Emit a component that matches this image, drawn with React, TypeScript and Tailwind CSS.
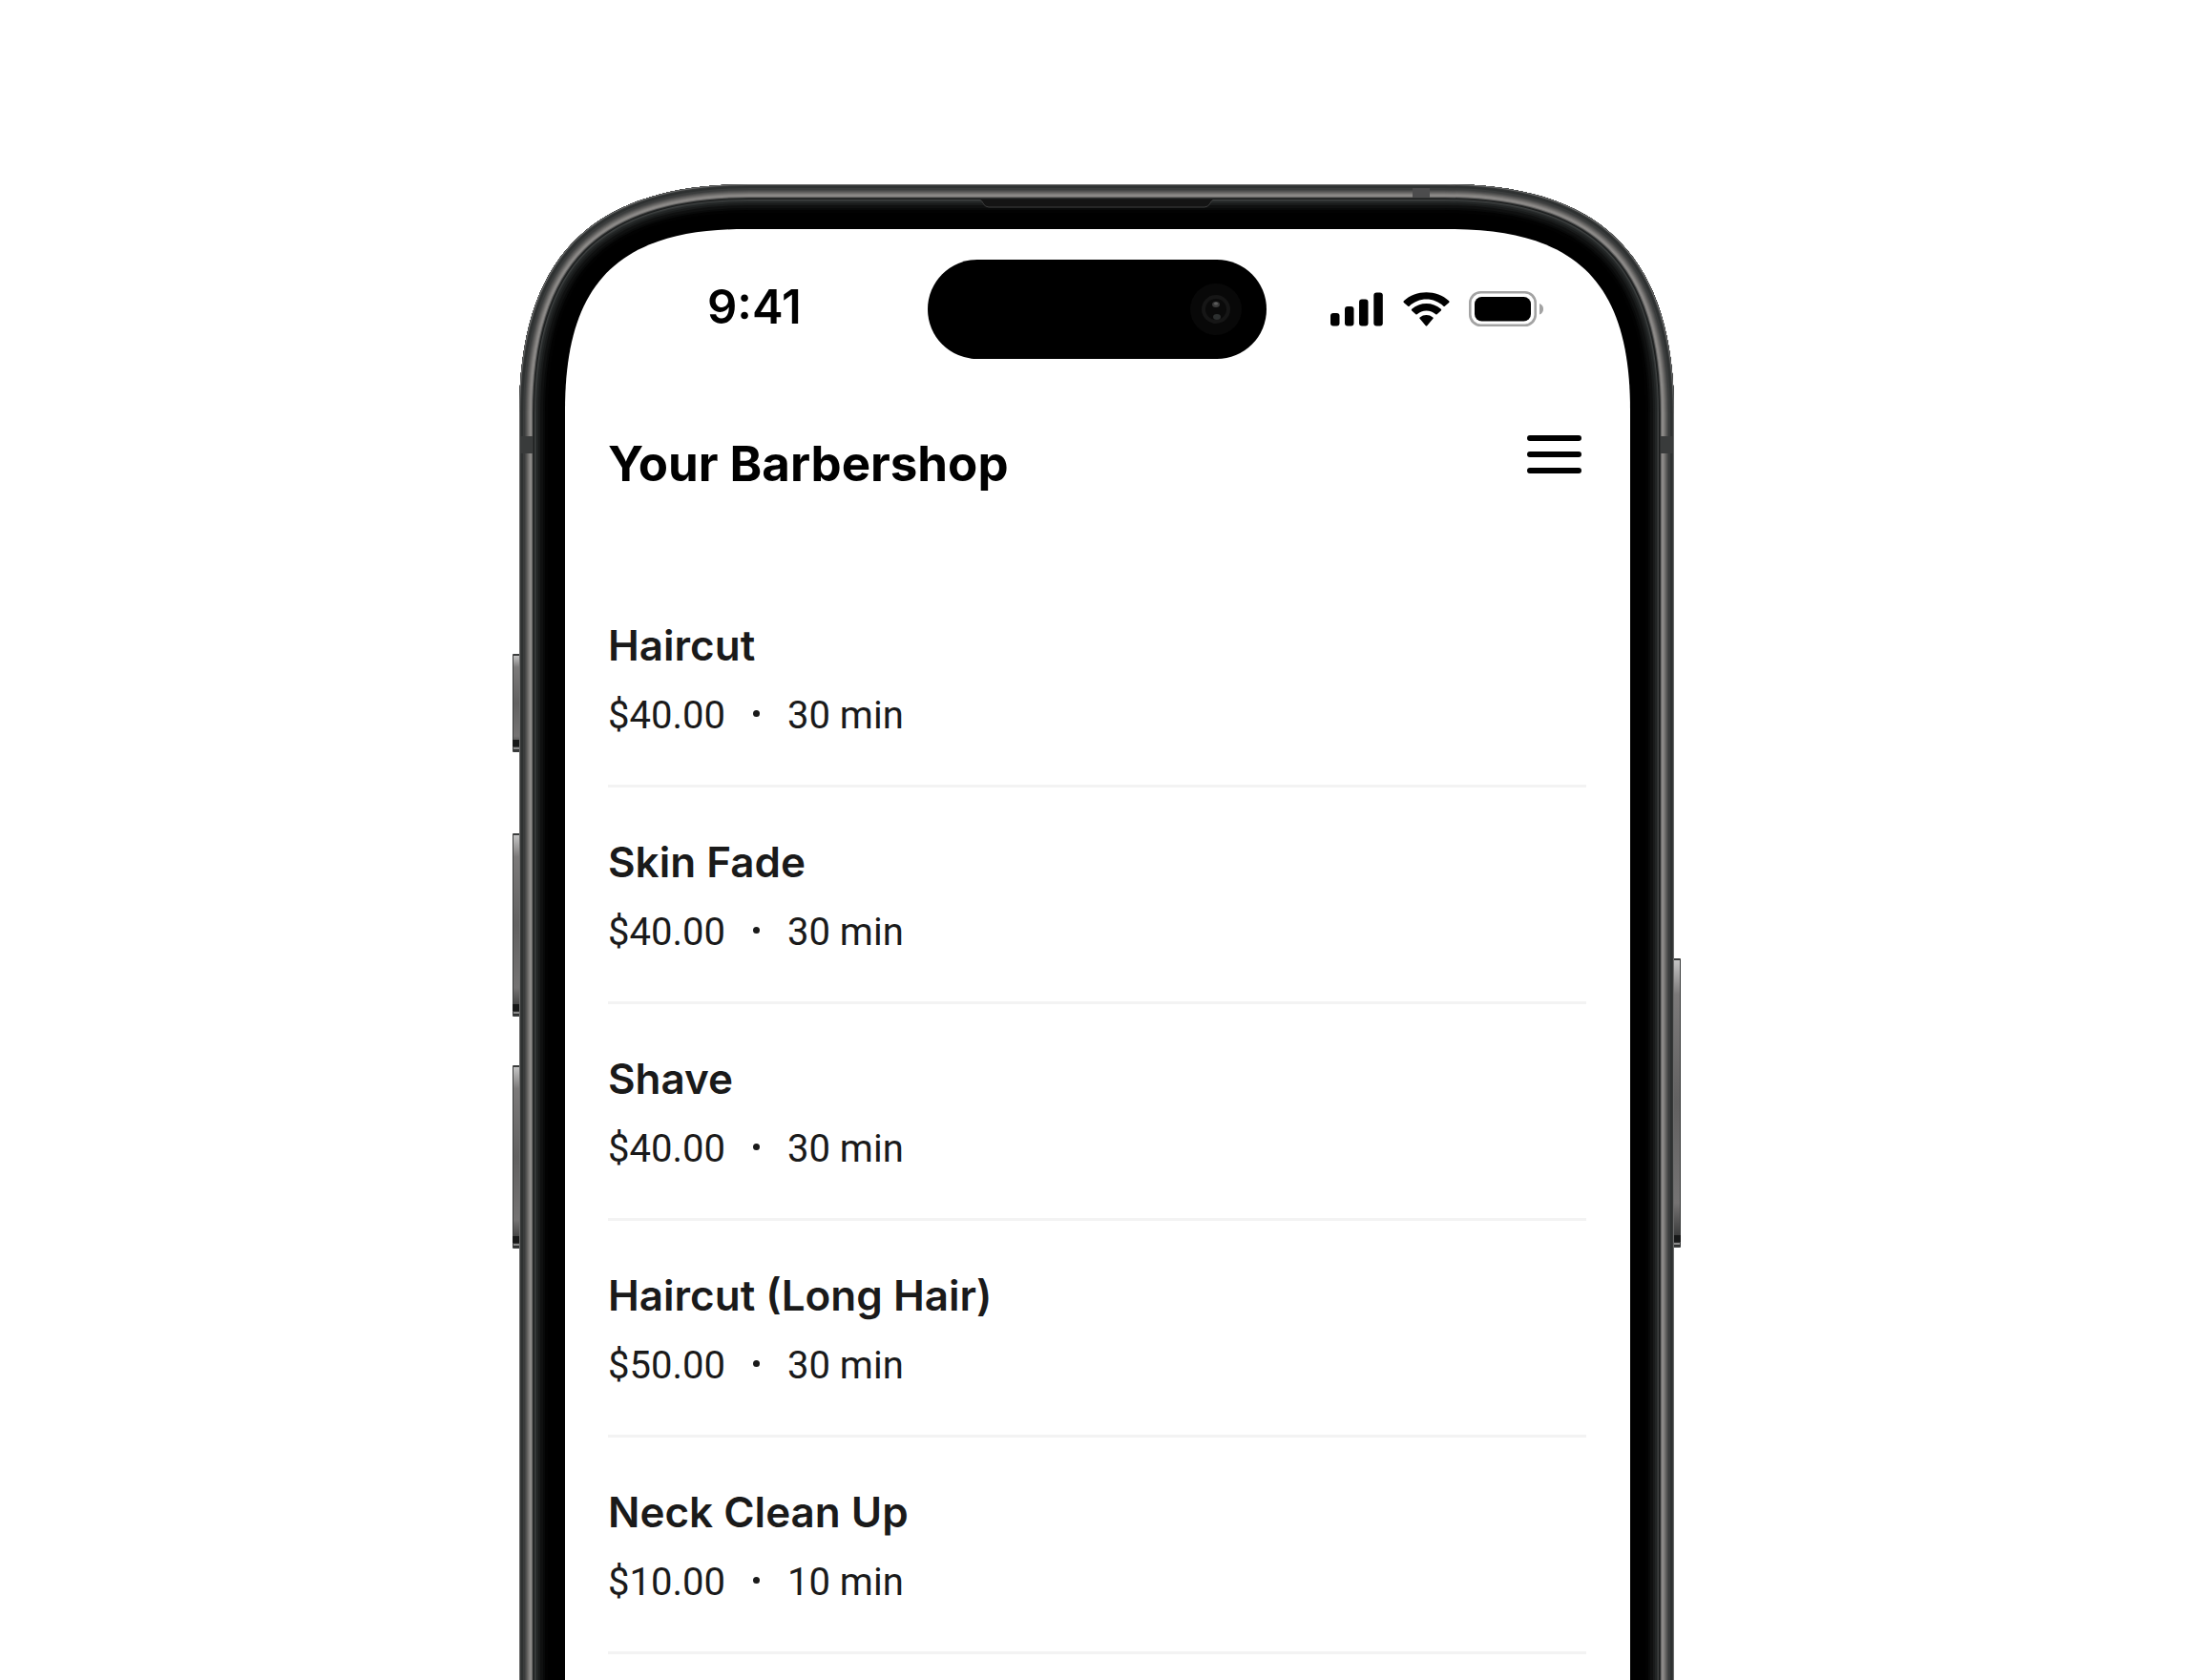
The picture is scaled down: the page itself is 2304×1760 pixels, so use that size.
interface Service {
  name: string;
  price: string;
  duration: string;
}

const services: Service[] = [
  { name: "Haircut", price: "$40.00", duration: "30 min" },
  { name: "Skin Fade", price: "$40.00", duration: "30 min" },
  { name: "Shave", price: "$40.00", duration: "30 min" },
  { name: "Haircut (Long Hair)", price: "$50.00", duration: "30 min" },
  { name: "Neck Clean Up", price: "$10.00", duration: "10 min" },
];

// Continuous top corners: e is where the curve starts, c where its handles sit.
// The bottom runs far below the fold.
const shellPath = (x: number, y: number, w: number, e: number, c: number) => {
  const r = x + w;
  return [
    `M${x} 4000 V${y + e}`,
    `C${x} ${y + c} ${x + c} ${y} ${x + e} ${y}`,
    `H${r - e}`,
    `C${r - c} ${y} ${r} ${y + c} ${r} ${y + e}`,
    `V4000 Z`,
  ].join(" ");
};

const outer = shellPath(0, 0, 1210, 241, 76);
const screen = shellPath(48, 47, 1116, 190, 56);

// [depth from the outer edge, colour], deepest first
const metal: [number, string][] = [
  [30, "#020202"],
  [27, "#080909"],
  [25, "#0f1010"],
  [22, "#191b1b"],
  [20, "#222525"],
  [18, "#303333"],
  [17, "#3d4040"],
  [16, "#1c1e1e"],
  [15, "#2e3030"],
  [14, "#6a6968"],
  [13, "#8b8987"],
  [11, "#807e7c"],
  [10, "#706f6d"],
  [9, "#626160"],
  [8, "#535352"],
  [7, "#464747"],
  [6, "#3a3c3c"],
  [4, "#2e3131"],
  [2, "#363838"],
  [1, "#6c6d6d"],
];

const leftKeys = [
  { y: 492, h: 103 },
  { y: 680, h: 192 },
  { y: 923, h: 192 },
];

const SideKey = ({ x, y, h }: { x: number; y: number; h: number }) => (
  <g>
    <rect x={x} y={y} width="8" height={h} rx="1" fill="#3b3d3d" />
    <rect x={x + 1} y={y + 2} width="6" height={h - 4} fill="url(#key)" />
    <rect x={x} y={y + h - 13} width="8" height="7" fill="#171818" />
    <rect x={x + 1} y={y + h - 5} width="6" height="2" fill="#8b8b8b" />
  </g>
);

const PhoneFrame = () => (
  <svg
    className="absolute -left-2 top-0 h-full w-[1226px]"
    aria-hidden="true"
  >
    <defs>
      <clipPath id="body">
        <path d={outer} />
      </clipPath>
      <linearGradient id="key" x1="0" y1="0" x2="0" y2="1">
        <stop offset="0" stopColor="#c4c4c4" />
        <stop offset="0.12" stopColor="#7c7a7a" />
        <stop offset="0.5" stopColor="#626161" />
        <stop offset="0.85" stopColor="#757373" />
        <stop offset="1" stopColor="#2a2b2b" />
      </linearGradient>
    </defs>
    <g transform="translate(8 0)">
      {leftKeys.map((key) => (
        <SideKey key={key.y} x={-7} y={key.y} h={key.h} />
      ))}
      <SideKey x={1209} y={811} h={303} />
      <g clipPath="url(#body)">
        <path d={outer} fill="#000" />
        {metal.map(([depth, color]) => (
          <path
            key={depth}
            d={outer}
            fill="none"
            stroke={color}
            strokeWidth={depth * 2}
          />
        ))}
        {/* antenna bands */}
        <rect x="1" y="264" width="13" height="18" fill="#393b3b" />
        <rect x="1196" y="264" width="13" height="18" fill="#393b3b" />
        <rect x="936" y="4" width="18" height="10" fill="#4c4c4d" />
      </g>
      {/* earpiece */}
      <path
        d="M483 16 Q485 17 486 20 Q488 24 492 24 H718 Q722 24 724 20 Q725 17 727 16 Z"
        fill="#141414"
      />
      <path
        d="M483 17 Q485 17 486 20 Q488 24 492 24 H718 Q722 24 724 20 Q725 17 727 17"
        fill="none"
        stroke="#3c3c3c"
      />
      <path d={screen} fill="#fff" />
    </g>
  </svg>
);

const DynamicIsland = () => (
  <div className="flex h-[104px] w-[355px] items-center justify-end rounded-full bg-black pr-[26px]">
    <svg width="54" height="54" viewBox="0 0 54 54" aria-hidden="true">
      <circle cx="27" cy="27" r="27" fill="#080808" />
      <circle cx="27" cy="27" r="15" fill="#161616" />
      <circle cx="27" cy="27" r="11" fill="#0a0a0a" />
      <ellipse cx="27" cy="22" rx="4" ry="3" fill="#3a3a3a" />
      <ellipse cx="27" cy="21" rx="2" ry="1.5" fill="#5c5c5c" />
      <ellipse cx="28" cy="35" rx="4" ry="3" fill="#2c2f2f" />
    </svg>
  </div>
);

const StatusIcons = () => (
  <div className="flex items-center">
    <svg width="55" height="36" viewBox="0 0 55 36" aria-label="Signal">
      <rect x="0" y="22" width="9.5" height="13.5" rx="3" />
      <rect x="15" y="15" width="9.5" height="20.5" rx="3" />
      <rect x="30" y="7.5" width="9.5" height="28" rx="3" />
      <rect x="45.3" y="0.5" width="9.5" height="35" rx="3" />
    </svg>
    <svg
      className="ml-[21px]"
      width="49"
      height="36"
      viewBox="0 0 49 36"
      aria-label="Wi-Fi"
    >
      <path d="M24.5 7.6 C31.2 7.6 37.6 10.2 42.4 14.8 C42.8 15.2 43.4 15.2 43.8 14.8 L48.2 10.9 C48.7 10.4 48.7 9.8 48.2 9.3 C35.4 -2.8 13.6 -2.8 0.8 9.3 C0.3 9.8 0.3 10.4 0.8 10.9 L5.2 14.8 C5.6 15.2 6.2 15.2 6.6 14.8 C11.4 10.2 17.8 7.6 24.5 7.6 Z" />
      <path d="M24.5 19.4 C28.2 19.4 31.6 20.8 34.3 23.3 C34.7 23.7 35.2 23.7 35.6 23.3 L39.8 19.4 C40.3 19 40.3 18.3 39.8 17.8 C31.2 9.9 17.8 9.9 9.2 17.8 C8.7 18.3 8.7 19 9.2 19.4 L13.4 23.3 C13.8 23.7 14.3 23.7 14.7 23.3 C17.4 20.8 20.8 19.4 24.5 19.4 Z" />
      <path d="M31.3 28 C31.8 27.6 31.8 26.9 31.3 26.5 C27.4 23.2 21.6 23.2 17.7 26.5 C17.2 26.9 17.2 27.6 17.7 28 L23.8 35.2 C24.2 35.7 24.8 35.7 25.2 35.2 Z" />
    </svg>
    <svg
      className="ml-5"
      width="78"
      height="38"
      viewBox="0 0 78 38"
      aria-label="Battery"
    >
      <rect
        x="1.3"
        y="1.3"
        width="68.4"
        height="34.4"
        rx="11"
        fill="none"
        stroke="#a3a3a3"
        strokeWidth="2.6"
      />
      <rect x="6" y="6" width="59" height="25.5" rx="7.5" />
      <path d="M74 13 Q78 14.5 78 18.7 Q78 23 74 24.5 Z" fill="#a3a3a3" />
    </svg>
  </div>
);

const ServiceItem = ({ name, price, duration }: Service) => (
  <li className="border-b-[3px] border-[#f3f3f3] pt-[52px] pb-12 text-[#1a1a1a]">
    <h2 className="text-[44px] leading-[52px] font-semibold">{name}</h2>
    <p className="mt-6 flex items-center gap-[29px] font-['Roboto',sans-serif] text-[40px] leading-[48px]">
      <span>{price}</span>
      <span className="mb-1.5 size-[7px] rounded-full bg-[#1a1a1a]" />
      <span>{duration}</span>
    </p>
  </li>
);

export default function App() {
  return (
    <main className="flex min-h-screen flex-col items-center overflow-hidden bg-white pt-[193px] pr-1.5 font-['Inter',sans-serif] text-black">
      <div className="relative w-full max-w-[1210px] grow px-12 pt-[47px]">
        <PhoneFrame />
        <div className="relative">
          <div className="grid grid-cols-[1fr_auto_1fr] items-center pt-8">
            <time className="pb-1 pl-[149px] text-[49px] leading-[48px] font-semibold">
              9:41
            </time>
            <DynamicIsland />
            <div className="flex justify-end pr-[89px]">
              <StatusIcons />
            </div>
          </div>

          <header className="flex items-start justify-between pt-[78px] pr-11 pl-[45px]">
            <h1 className="text-[51px] leading-[64px] font-bold">
              Your Barbershop
            </h1>
            <button type="button" aria-label="Menu" className="cursor-pointer">
              <svg
                width="62"
                height="46"
                viewBox="0 0 62 46"
                stroke="currentColor"
                strokeWidth="6"
                strokeLinecap="round"
              >
                <path d="M3 5h51M3 22h51M3 39h51" />
              </svg>
            </button>
          </header>

          <ul className="mt-20 pr-11 pl-[45px]">
            {services.map((service) => (
              <ServiceItem key={service.name} {...service} />
            ))}
          </ul>
        </div>
      </div>
    </main>
  );
}
